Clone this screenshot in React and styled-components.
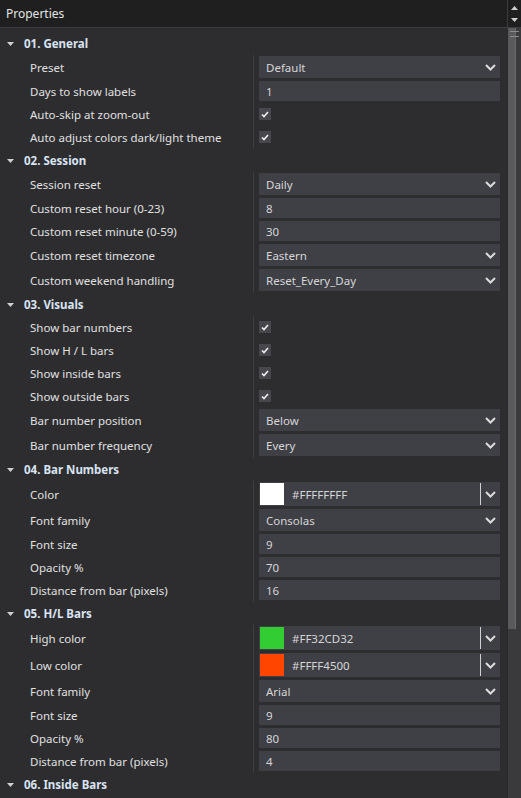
import React from "react";
import styled, { createGlobalStyle } from "styled-components";

const GlobalStyle = createGlobalStyle`
  html, body {
    margin: 0;
    padding: 0;
    background: #2d2d30;
  }
  body {
    font-family: "Noto Sans", "Open Sans", sans-serif;
    font-size: 11.5px;
    color: #e2e2e2;
  }
`;

// data for the property grid
const groups = [
  {
    title: "01. General",
    rows: [
      { label: "Preset", type: "select", value: "Default" },
      { label: "Days to show labels", type: "input", value: "1" },
      { label: "Auto-skip at zoom-out", type: "check" },
      { label: "Auto adjust colors dark/light theme", type: "check" },
    ],
  },
  {
    title: "02. Session",
    rows: [
      { label: "Session reset", type: "select", value: "Daily" },
      { label: "Custom reset hour (0-23)", type: "input", value: "8" },
      { label: "Custom reset minute (0-59)", type: "input", value: "30" },
      { label: "Custom reset timezone", type: "select", value: "Eastern" },
      { label: "Custom weekend handling", type: "select", value: "Reset_Every_Day" },
    ],
  },
  {
    title: "03. Visuals",
    rows: [
      { label: "Show bar numbers", type: "check" },
      { label: "Show H / L bars", type: "check" },
      { label: "Show inside bars", type: "check" },
      { label: "Show outside bars", type: "check" },
      { label: "Bar number position", type: "select", value: "Below" },
      { label: "Bar number frequency", type: "select", value: "Every" },
    ],
  },
  {
    title: "04. Bar Numbers",
    rows: [
      { label: "Color", type: "color", value: "#FFFFFFFF", swatch: "#ffffff" },
      { label: "Font family", type: "select", value: "Consolas" },
      { label: "Font size", type: "input", value: "9" },
      { label: "Opacity %", type: "input", value: "70" },
      { label: "Distance from bar (pixels)", type: "input", value: "16" },
    ],
  },
  {
    title: "05. H/L Bars",
    rows: [
      { label: "High color", type: "color", value: "#FF32CD32", swatch: "#32cd32" },
      { label: "Low color", type: "color", value: "#FFFF4500", swatch: "#ff4500" },
      { label: "Font family", type: "select", value: "Arial" },
      { label: "Font size", type: "input", value: "9" },
      { label: "Opacity %", type: "input", value: "80" },
      { label: "Distance from bar (pixels)", type: "input", value: "4" },
    ],
  },
  { title: "06. Inside Bars", rows: [] },
];

const Chevron = () => (
  <svg width="11" height="7" viewBox="0 0 11 7">
    <polyline points="1,1 5.5,5.5 10,1" fill="none" stroke="#dcdcdc" strokeWidth="2" />
  </svg>
);

const Check = () => (
  <svg width="8" height="7" viewBox="0 0 8 7">
    <polyline points="1,3.5 3,5.5 7,1" fill="none" stroke="#f0f0f0" strokeWidth="1.6" />
  </svg>
);

const Caret = ({ up }) => (
  <svg width="7" height="4" viewBox="0 0 7 4">
    <polygon points={up ? "0,4 7,4 3.5,0" : "0,0 7,0 3.5,4"} fill="#d0d0d0" />
  </svg>
);

const App = () => {
  const renderValue = (row) => {
    if (row.type === "select") {
      return (
        <Select>
          <span>{row.value}</span>
          <Chevron />
        </Select>
      );
    }
    if (row.type === "input") {
      return <Input>{row.value}</Input>;
    }
    if (row.type === "check") {
      return (
        <CheckCell>
          <CheckBox>
            <Check />
          </CheckBox>
        </CheckCell>
      );
    }
    return (
      <ColorBox>
        <Swatch $color={row.swatch} />
        <HexText>{row.value}</HexText>
        <ColorDrop>
          <Chevron />
        </ColorDrop>
      </ColorBox>
    );
  };

  return (
    <>
      <GlobalStyle />
      <Window>
        <TitleBar>
          <Title>Properties</Title>
          <ArrowBox>
            <Caret up />
            <Caret />
          </ArrowBox>
        </TitleBar>
        <Body>
          <Content>
            {groups.map((group) => (
              <div key={group.title}>
                <GroupHeader>
                  <Caret />
                  <span>{group.title}</span>
                </GroupHeader>
                {group.rows.map((row, i) => (
                  <Row key={i}>
                    <Label>{row.label}</Label>
                    <ValueCell>{renderValue(row)}</ValueCell>
                  </Row>
                ))}
              </div>
            ))}
          </Content>
          <ScrollBar>
            <Thumb>
              <Grip />
            </Thumb>
          </ScrollBar>
        </Body>
      </Window>
    </>
  );
};

const Window = styled.div`
  width: 521px;
  height: 798px;
  display: flex;
  flex-direction: column;
  overflow: hidden;
  background: #2d2d30;
`;

const TitleBar = styled.div`
  height: 27px;
  display: flex;
  align-items: stretch;
  background: #1f1f1f;
  border-bottom: 1px solid #3c3c3f;
`;

const Title = styled.div`
  flex: 1;
  display: flex;
  align-items: center;
  padding-left: 6px;
  font-size: 12px;
  color: #e4e4e4;
`;

const ArrowBox = styled.div`
  width: 13px;
  border-left: 1px solid #3c3c3f;
  display: flex;
  flex-direction: column;
  align-items: center;
  justify-content: center;
  gap: 8px;
`;

const Body = styled.div`
  flex: 1;
  display: flex;
  min-height: 0;
`;

const Content = styled.div`
  flex: 1;
  padding-top: 4px;
`;

const GroupHeader = styled.div`
  height: 23px;
  display: flex;
  align-items: center;
  gap: 10px;
  padding-left: 7px;
  font-weight: 700;
  font-size: 11.5px;
  color: #d9e3f2;
`;

const Row = styled.div`
  display: grid;
  grid-template-columns: 253px 1fr;
`;

const Label = styled.div`
  display: flex;
  align-items: center;
  padding-left: 30px;
  white-space: nowrap;
  color: #e0e0e0;
`;

const ValueCell = styled.div`
  border-left: 1px solid #3e3e42;
  padding: 1px 7px 2px 5px;
`;

const Field = styled.div`
  background: #3f3f46;
  color: #d6d6d6;
  display: flex;
  align-items: center;
  padding-left: 7px;
`;

const Input = styled(Field)`
  height: 20px;
`;

const Select = styled(Field)`
  height: 22px;
  justify-content: space-between;
  padding-right: 4px;
`;

const CheckCell = styled.div`
  height: 20px;
  display: flex;
  align-items: center;
`;

const CheckBox = styled.div`
  width: 12px;
  height: 12px;
  background: #47474d;
  display: flex;
  align-items: center;
  justify-content: center;
`;

const ColorBox = styled.div`
  height: 24px;
  background: #3f3f46;
  display: flex;
  align-items: center;
  padding-left: 1px;
`;

const Swatch = styled.div`
  width: 24px;
  height: 22px;
  background: ${(p) => p.$color};
`;

const HexText = styled.span`
  flex: 1;
  padding-left: 8px;
  color: #d6d6d6;
`;

const ColorDrop = styled.div`
  height: 22px;
  width: 19px;
  border-left: 1px solid #d0d0d0;
  display: flex;
  align-items: center;
  justify-content: center;
`;

const ScrollBar = styled.div`
  width: 14px;
  background: #3a3a3c;
  border-left: 1px solid #2a2a2c;
  box-sizing: border-box;
`;

const Thumb = styled.div`
  width: 7px;
  height: 601px;
  background: #5a5a5c;
  border-right: 1px solid #6a6a6a;
  position: relative;
`;

const Grip = styled.div`
  position: absolute;
  top: 3px;
  left: 2px;
  width: 9px;
  height: 4px;
  border-top: 1px solid #8a8a8a;
  border-bottom: 1px solid #8a8a8a;
`;

export default App;
